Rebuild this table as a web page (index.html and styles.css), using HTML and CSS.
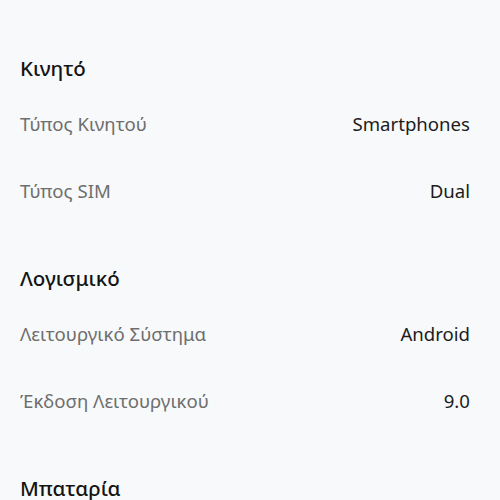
FILE: index.html
```html
<!DOCTYPE html>
<html lang="el">

<head>
    <meta charset="UTF-8">
    <meta name="viewport" content="width=device-width, initial-scale=1.0">
    <title>Χαρακτηριστικά</title>
    <link rel="stylesheet" href="styles.css">
</head>

<body>
    <div class="specs">
        <section class="group">
            <h2>Κινητό</h2>
            <div class="row">
                <span class="label">Τύπος Κινητού</span>
                <span class="value">Smartphones</span>
            </div>
            <div class="row">
                <span class="label">Τύπος SIM</span>
                <span class="value">Dual</span>
            </div>
        </section>

        <section class="group">
            <h2>Λογισμικό</h2>
            <div class="row">
                <span class="label">Λειτουργικό Σύστημα</span>
                <span class="value">Android</span>
            </div>
            <div class="row">
                <span class="label">Έκδοση Λειτουργικού</span>
                <span class="value">9.0</span>
            </div>
        </section>

        <section class="group">
            <h2>Μπαταρία</h2>
        </section>
    </div>
</body>

</html>
```

FILE: styles.css
```css
* {
    box-sizing: border-box;
    margin: 0;
    padding: 0;
    font-family: 'Noto Sans', 'Open Sans', sans-serif;
}

body {
    background-color: #f7f9fa;
    color: #1c1c1c;
}

.specs {
    padding: 14px 30px 0 20px;
}

.group {
    padding-top: 42px;
}

h2 {
    font-size: 20.5px;
    font-weight: 500;
    line-height: 24px;
    margin-bottom: 10px;
    color: #141414;
}

.row {
    display: flex;
    justify-content: space-between;
    align-items: center;
    height: 67px;
    font-size: 18.6px;
}

.label {
    color: #6e6e6e;
}

.value {
    color: #1c1c1c;
}
```
